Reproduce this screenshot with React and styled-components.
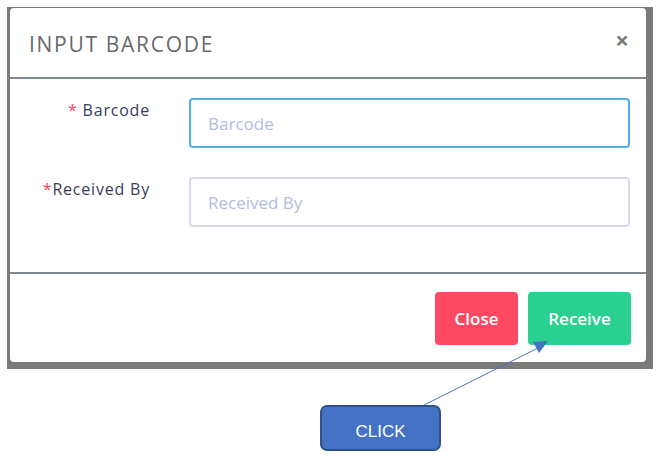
import styled, { createGlobalStyle } from "styled-components";

const GlobalStyle = createGlobalStyle`
  *, *::before, *::after {
    box-sizing: border-box;
  }
  html, body {
    margin: 0;
    padding: 0;
    background: #ffffff;
    font-family: "Open Sans", "Liberation Sans", sans-serif;
  }
`;

const Page = styled.div`
  position: relative;
  width: 670px;
  height: 461px;
  padding: 7px 0 0 7px;
  overflow: hidden;
`;

const Backdrop = styled.div`
  width: 646px;
  height: 362px;
  padding: 1px 7px 7px 3px;
  background: #7a7a7a;
`;

const Modal = styled.div`
  height: 100%;
  background: #fff;
  border-radius: 4px;
  display: flex;
  flex-direction: column;
`;

const Header = styled.div`
  height: 71px;
  display: flex;
  align-items: center;
  justify-content: space-between;
  padding: 0 17px 0 19px;
  border-bottom: 2px solid #7f8795;
`;

const Title = styled.h4`
  margin: 2px 0 0;
  font-weight: 400;
  font-size: 21px;
  color: #66686d;
  letter-spacing: 1.7px;
`;

const CloseX = styled.span`
  font-size: 24px;
  font-weight: 700;
  color: #7a7a7a;
  line-height: 1;
  margin-top: -6px;
`;

const Body = styled.div`
  height: 195px;
  display: grid;
  grid-template-columns: 140px 1fr;
  column-gap: 39px;
  row-gap: 29px;
  align-content: start;
  padding: 19px 16px 0 0;
  border-bottom: 2px solid #7f8795;
`;

const Label = styled.label`
  text-align: right;
  padding-top: 1px;
  font-size: 16px;
  letter-spacing: 0.8px;
  color: #383c5a;
`;

const Star = styled.span`
  color: #f2455f;
  margin-right: ${(p) => (p.$spaced ? "5px" : "0")};
`;

const Input = styled.input`
  width: 100%;
  height: 50px;
  padding: 0 17px;
  border-radius: 4px;
  border: 2px solid ${(p) => (p.$focused ? "#55aef0" : "#d6d9f0")};
  font-family: inherit;
  font-size: 17px;
  outline: none;
  &::placeholder {
    color: #b3bbe2;
  }
`;

const Footer = styled.div`
  flex: 1;
  display: flex;
  justify-content: flex-end;
  align-items: flex-start;
  gap: 10px;
  padding: 18px 15px 0 0;
`;

const Button = styled.button`
  height: 53px;
  width: ${(p) => p.$w}px;
  border: none;
  border-radius: 4px;
  background: ${(p) => p.$bg};
  color: #fff;
  font-family: inherit;
  font-size: 17px;
  font-weight: 600;
`;

const Callout = styled.div`
  position: absolute;
  left: 320px;
  top: 405px;
  width: 121px;
  height: 46px;
  border: 2px solid #2f528f;
  border-radius: 7px;
  background: #4472c4;
  color: #fff;
  display: flex;
  align-items: center;
  justify-content: center;
  font-family: "Liberation Sans", sans-serif;
  font-size: 17px;
  padding-top: 8px;
`;

const Arrow = styled.svg`
  position: absolute;
  left: 0;
  top: 0;
  pointer-events: none;
`;

export default function App() {
  return (
    <Page>
      <GlobalStyle />
      <Backdrop>
        <Modal>
          <Header>
            <Title>INPUT BARCODE</Title>
            <CloseX>×</CloseX>
          </Header>
          <Body>
            <Label>
              <Star $spaced>*</Star>Barcode
            </Label>
            <Input $focused placeholder="Barcode" />
            <Label>
              <Star>*</Star>Received By
            </Label>
            <Input placeholder="Received By" />
          </Body>
          <Footer>
            <Button $w={83} $bg="#ff4861">Close</Button>
            <Button $w={103} $bg="#2ad08f">Receive</Button>
          </Footer>
        </Modal>
      </Backdrop>
      <Arrow width="670" height="461">
        <line x1="424" y1="405" x2="538" y2="348" stroke="#4472c4" strokeWidth="1" />
        <polygon points="548,341 533,342 539,353" fill="#4472c4" />
      </Arrow>
      <Callout>CLICK</Callout>
    </Page>
  );
}
